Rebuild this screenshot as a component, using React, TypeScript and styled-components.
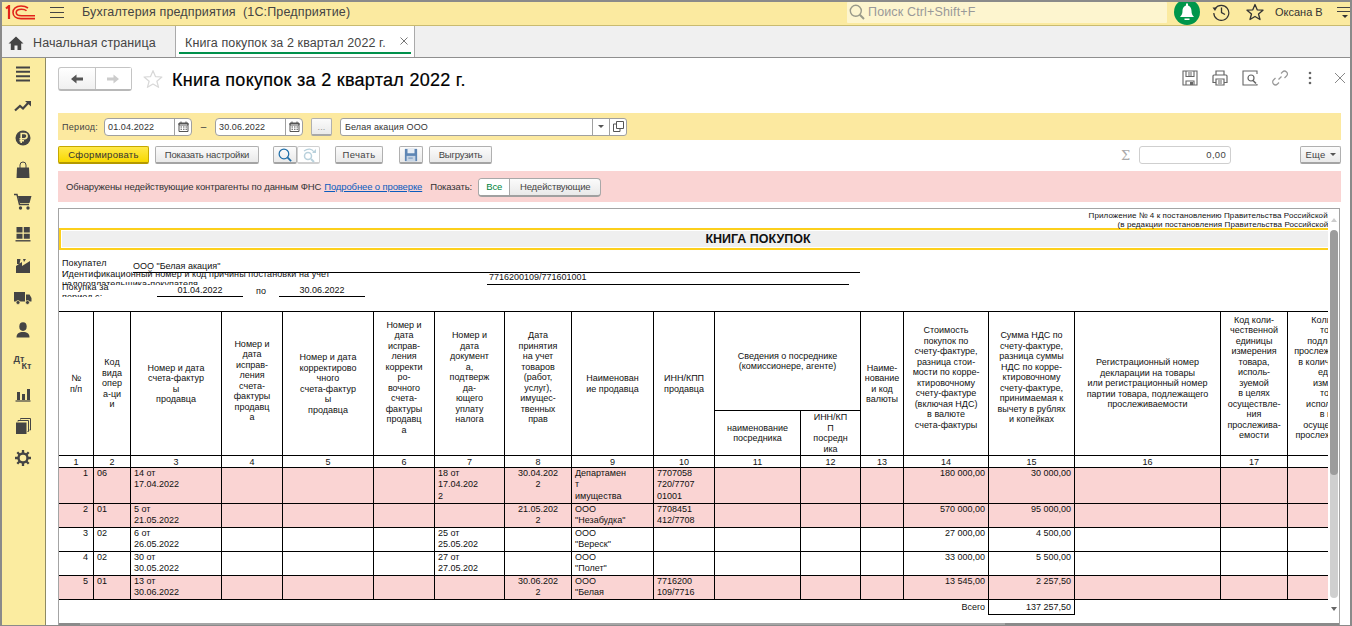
import React from "react";
import styled, { createGlobalStyle } from "styled-components";

const Global = createGlobalStyle`
  html, body { margin: 0; padding: 0; background: #fff; }
  body { font-family: "Liberation Sans", Arial, sans-serif; overflow: hidden; }
  * { box-sizing: border-box; }
`;

const Window = styled.div`
  width: 1352px; height: 626px; display: flex; flex-direction: column; overflow: hidden;
  border: 2px solid #8a8a8a; border-bottom-width: 1px; background: #fff; color: #333;
`;
const TopBar = styled.header`
  height: 24px; flex: none; display: flex; align-items: center; background: #fbeaa0;
  border-bottom: 1px solid #c9bb70; overflow: hidden;
`;
const LogoBox = styled.div`width: 32px; margin-left: 3px; height: 15px; display: flex; flex: none; margin-top: -2px;`;
const Burger = styled.div`
  width: 14px; height: 11px; margin-left: 13px; border-top: 1px solid #444; border-bottom: 1px solid #444; position: relative; margin-top: -2px; flex: none;
  &::after { content: ""; position: absolute; left: 0; right: 0; top: 4px; height: 1px; background: #444; }
`;
const AppTitle = styled.div`margin-left: 18px; font-size: 12.5px; color: #444; letter-spacing: .15px; white-space: pre; margin-top: -4px; width: 765px; flex: none;`;
const SearchBox = styled.div`
  width: 320px; height: 21px; background: #fdf5cf; display: flex; align-items: center; padding-left: 2px; gap: 3px; margin-top: -3px; border-radius: 1px; flex: none;
  color: #999; font-size: 12.5px; letter-spacing: .15px;
`;
const BellCircle = styled.div`margin-left: 7px; margin-top: -4px; width: 26px; height: 26px; flex: none; display: flex;`;
const TopIcon = styled.div`width: 18px; height: 18px; flex: none; display: flex; margin-top: -4px; margin-left: ${p => p.$ml}px;`;
const UserName = styled.div`margin-left: 11px; font-size: 11px; color: #333; margin-top: -3px; width: 47px; white-space: nowrap; flex: none;`;
const TopMenu = styled.div`margin-left: 15px; width: 13px; display: flex; flex-direction: column; gap: 3px; margin-top: -3px; flex: none;
  span { display: block; height: 1px; background: #444; }
  span:last-child { width: 0; height: 0; background: none; border: 3px solid transparent; border-top-color: #333; border-bottom: 0; margin-left: 5px; margin-top: 0; }
`;

const TabBar = styled.nav`
  height: 32px; flex: none; display: flex; background: #f0f0f0; border-bottom: 1px solid #8f8f8f;
`;
const HomeTab = styled.div`
  width: 173px; display: flex; align-items: center; padding-left: 6px; gap: 9px; font-size: 12.5px; color: #444; letter-spacing: .1px; padding-top: 2px;
`;
const ActiveTab = styled.div`
  width: 240px; background: #fff; border-left: 1px solid #aaa; border-right: 1px solid #aaa; position: relative; display: flex; align-items: center;
  padding-left: 9px; padding-top: 2px; font-size: 12.5px; color: #444; letter-spacing: .1px; white-space: nowrap;
  &::after { content: ""; position: absolute; left: 3px; right: 3px; bottom: 3px; height: 2px; background: #00914c; }
`;
const TabClose = styled.span`position: absolute; right: 6px; top: 11px; display: flex;`;

const Body = styled.div`flex: 1; min-height: 0; display: flex;`;
const Sidebar = styled.aside`
  width: 44px; flex: none; background: #fbeca0; border-right: 1px solid #8e8a63; display: flex; flex-direction: column; align-items: center;
`;
const SideItem = styled.div`
  width: 18px; height: 32px; display: flex; align-items: center; justify-content: center; margin-left: -2px; flex: none; color: #444; position: relative;
`;
const DtKt = styled.div`
  font-size: 9px; font-weight: 700; color: #444; width: 18px; line-height: 8px; letter-spacing: 0;
  span { display: block; }
  span + span { text-align: right; margin-top: -1px; }
`;
const Main = styled.main`flex: 1; min-width: 0; display: flex; flex-direction: column; padding: 9px 9px 0 12px;`;

const TitleRow = styled.div`height: 24px; display: flex; align-items: center; flex: none;`;
const NavGroup = styled.div`
  display: flex; width: 74px; height: 24px; border: 1px solid #c4c4c4; border-bottom: 2px solid #b8b8b8; border-radius: 3px; background: linear-gradient(#fff, #f0f0f0);
`;
const NavBtn = styled.div`
  flex: 1; display: flex; align-items: center; justify-content: center;
  & + & { border-left: 1px solid #c4c4c4; background: #fff; }
`;
const FavStar = styled.div`margin-left: 11px; width: 20px; height: 20px; display: flex;`;
const PageTitle = styled.h1`margin: 2px 0 0 9px; font-size: 18px; font-weight: 400; color: #000; letter-spacing: .28px; -webkit-text-stroke: .2px #000; white-space: nowrap;`;
const TitleActions = styled.div`margin-left: auto; margin-right: -7px; display: flex; align-items: center; gap: 14px; margin-top: -2px;`;
const ActionIcon = styled.div`width: 16px; height: 16px; display: flex;`;

const FilterBand = styled.section`
  margin-top: 22px; height: 27px; flex: none; background: #fce9a0; display: flex; align-items: center; padding-left: 4px; font-size: 9px; color: #444; letter-spacing: .12px;
`;
const FieldLabel = styled.span`width: 42px; flex: none; letter-spacing: .3px;`;
const DateField = styled.div`
  width: 88px; height: 18px; background: #fff; border: 1px solid #a0a0a0; border-radius: 4px; display: flex; align-items: center; flex: none; padding-left: 3px; color: #333;
`;
const DateText = styled.span`flex: 1;`;
const CalBtn = styled.span`width: 17px; height: 16px; border-left: 1px solid #a0a0a0; display: flex; align-items: center; justify-content: center;`;
const Dash = styled.span`width: 23px; text-align: center; flex: none; font-size: 10px;`;
const DotsBtn = styled.div`
  margin-left: 8px; width: 21px; height: 18px; border: 1px solid #b0b0b0; border-bottom: 2px solid #a8a8a8; border-radius: 2px; background: linear-gradient(#fbfbfb, #eaeaea); text-align: center; font-size: 9px; line-height: 17px; color: #999; flex: none;
`;
const OrgField = styled.div`
  margin-left: 8px; width: 287px; height: 18px; background: #fff; border: 1px solid #a0a0a0; border-radius: 3px; display: flex; align-items: center; flex: none; padding-left: 4px; color: #333;
`;
const OrgText = styled.span`flex: 1;`;
const OrgBtn = styled.span`width: 17px; height: 16px; border-left: 1px solid #a0a0a0; display: flex; align-items: center; justify-content: center;`;
const Caret = styled.span`width: 0; height: 0; border: 3px solid transparent; border-top: 3px solid #555; border-bottom: 0;`;

const ActionRow = styled.section`margin-top: 6px; height: 18px; flex: none; display: flex; align-items: stretch; font-size: 9.5px; letter-spacing: .3px;`;
const Btn = styled.div`
  width: ${p => p.$w}px; margin-left: ${p => p.$ml || 0}px; flex: none; display: flex; align-items: center; justify-content: center; gap: 4px;
  border: 1px solid #b0b0b0; border-bottom: 2px solid #a4a4a4; border-radius: 2px; background: linear-gradient(#fcfcfc, #e9e9e9); color: #444;
  ${p => p.$tight && "letter-spacing: -.2px;"}
`;
const PrimaryBtn = styled(Btn)`
  background: linear-gradient(#ffe94a, #f8d800); border-color: #c5a800; border-bottom-color: #b49900; color: #333;
`;
const GhostBtn = styled(Btn)`background: #fff; border-color: #d0d0d0;`;
const Sigma = styled.span`margin-left: auto; width: 18px; color: #aaa; font-size: 13px; font-family: "DejaVu Serif", serif; line-height: 20px; flex: none;`;
const SumField = styled.div`
  width: 92px; flex: none; border: 1px solid #cfcfcf; border-radius: 3px; text-align: right; padding-right: 4px; line-height: 16px; color: #444; background: #fff;
`;

const AlertBand = styled.section`
  margin-top: 7px; height: 31px; flex: none; background: #fad4d3; display: flex; align-items: center; padding-left: 8px; font-size: 9.5px; letter-spacing: -.13px; color: #333; white-space: nowrap;
`;
const AlertLink = styled.a`margin-left: 3px; color: #0b5cbe; text-decoration: underline;`;
const AlertShow = styled.span`margin-left: 8px; width: 49px; flex: none;`;
const Segment = styled.div`
  width: 123px; height: 19px; display: flex; border: 1px solid #a8a8a8; border-bottom: 2px solid #a0a0a0; border-radius: 4px; overflow: hidden; background: linear-gradient(#fbfbfb, #e9e9e9); margin-top: 1px; margin-left: -1px;
`;
const SegOn = styled.span`width: 31px; background: #fff; color: #00843d; text-align: center; line-height: 16px; border-right: 1px solid #a8a8a8; flex: none;`;
const SegOff = styled.span`flex: 1; text-align: center; line-height: 16px; color: #444;`;

const ReportFrame = styled.section`
  margin-top: 6px; margin-right: 1px; flex: 1; min-height: 0; border: 1px solid #a4a4a4; border-bottom: 0; display: flex; flex-direction: column;
`;
const ReportInner = styled.div`flex: 1; min-height: 0; display: flex;`;
const Viewport = styled.div`flex: 1; min-width: 0; overflow: hidden;`;
const Sheet = styled.div`width: 1398px; font-size: 9px; color: #111;`;
const Notes = styled.div`height: 19px; padding-top: 2px; text-align: right; font-size: 8px; line-height: 9px; letter-spacing: .1px; white-space: nowrap;`;
const Band = styled.div`
  height: 22px; border: 2px solid #fccf1c; box-shadow: inset 0 0 0 1px #fff; background: #efefef; text-align: center; font-size: 12.5px; font-weight: 700; line-height: 18px; color: #111;
`;
const BuyerGrid = styled.div`
  height: 61px; display: grid;
  grid-template-columns: 3px 71px 24px 86px 36px 86px 122px 362px 11px 1fr;
  grid-template-rows: 10px 9px 4px 11px 1px 12px 14px;
`;
const BuyerLabel = styled.div`
  grid-column: 2 / ${p => p.$colEnd}; grid-row: ${p => p.$row}; overflow: hidden; width: ${p => p.$w}px;
`;
const BuyerLabelText = styled.div`
  margin-top: ${p => p.$shift || 0}px; line-height: 10px; letter-spacing: .09px; overflow-wrap: anywhere;
`;
const BuyerValue = styled.div`
  grid-column: ${p => p.$col}; grid-row: ${p => p.$row}; border-bottom: ${p => (p.$line ? "1px solid #000" : "0")};
  line-height: 11px; white-space: nowrap; display: flex; align-items: flex-end; justify-content: ${p => p.$align === "center" ? "center" : "flex-start"}; padding-left: ${p => p.$pl || 0}px; padding-bottom: ${p => p.$pb || 0}px;
`;

const Table = styled.table`
  border-collapse: separate; border-spacing: 0; table-layout: fixed; width: 1325px; font-size: 9px; color: #111;
`;
const Head = styled.th`
  font-weight: 400; border-right: 1px solid #000; border-bottom: 1px solid #000; ${p => p.$top && "border-top: 1px solid #000;"} padding: 0 0 ${p => p.$pb || 0}px; text-align: center; vertical-align: middle;
  white-space: pre; line-height: 10.5px; overflow: hidden; height: ${p => p.$h || "auto"}; background: #fff;
`;
const NumCell = styled.td`
  border-right: 1px solid #000; border-bottom: 1px solid #000; text-align: center; padding: 0; height: 12px; line-height: 10px; overflow: hidden; font-size: 9px;
`;
const DataRow = styled.tr`background: ${p => (p.$pink ? "#fad4d3" : "#fff")};`;
const DataCell = styled.td`
  border-right: 1px solid #000; border-bottom: 1px solid #000; padding: 0 3px; vertical-align: top; white-space: pre; line-height: 11.4px; overflow: hidden;
  text-align: ${p => p.$align || "left"}; height: ${p => p.$h}px;
  &:first-child { padding-right: 5px; }
`;
const TotalLabel = styled.td`text-align: right; padding: 0 3px; height: 15px; line-height: 14px; border-right: 1px solid #000; vertical-align: top;`;
const TotalValue = styled.td`text-align: right; padding: 0 3px; border-right: 1px solid #000; border-bottom: 1px solid #000; line-height: 14px; vertical-align: top;`;

const VScroll = styled.div`width: 11px; flex: none; display: flex; flex-direction: column; align-items: stretch; padding: 0 1px 0 2px; background: #fff;`;
const ArrowUp = styled.div`width: 0; height: 0; margin: 9px 0 8px 1px; border: 3px solid transparent; border-top: 0; border-bottom: 4px solid #ccc;`;
const ScrollTrack = styled.div`height: 368px; flex: none; background: #cfcfcf; border-radius: 4px; overflow: hidden;`;
const ScrollThumb = styled.div`height: 245px; background: #9c9c9c; border-radius: 4px;`;
const ArrowDown = styled.div`width: 0; height: 0; margin: 9px 0 0 1px; border: 3px solid transparent; border-bottom: 0; border-top: 4px solid #666;`;
const HScroll = styled.div`height: 2px; flex: none; background: #8a8a8a; padding-left: 21px;`;
const HThumb = styled.div`width: 925px; height: 2px; background: #a6a6a6;`;

const d = "#444";

const Logo = () => (
  <svg width="30" height="15" viewBox="0 0 30 15" fill="none" stroke="#e2231a" strokeWidth="1.6">
    <path d="M1 3.5 L4 1 V14" strokeWidth="2.2" />
    <path d="M23 3 C21 1.5 19 1 16 1 C11 1 8 4 8 7.5 C8 11 11 13.6 16 13.6 H30" />
    <path d="M21.5 5.8 C20.5 4.8 18.5 4.2 16.5 4.2 C13.5 4.2 11.2 5.5 11.2 7.5 C11.2 9.5 13.5 10.8 16.5 10.8 H30" />
  </svg>
);
const Svg = ({ s = 18, vb = 18, children, ...r }: any) => (
  <svg width={s} height={s} viewBox={`0 0 ${vb} ${vb}`} fill="none" {...r}>{children}</svg>
);

const IMenu = () => <Svg><path d="M2 2.5h14M2 6.8h14M2 11.2h14M2 15.5h14" stroke={d} strokeWidth="2" /></Svg>;
const ITrend = () => <Svg><path d="M1 13.5 L6 9 L9 11.5 L15 5" stroke={d} strokeWidth="2.2" /><path d="M11 4 H17 V9.5 Z" fill={d} /></Svg>;
const IRuble = () => <Svg><circle cx="9" cy="9" r="7.5" fill={d} /><path d="M7.2 14V4.5H10.5a2.6 2.6 0 0 1 0 5.2H5.5M5.5 11.8H10" stroke="#fbeca0" strokeWidth="1.6" /></Svg>;
const IBag = () => <Svg><path d="M3 6.500h12l.5 10.500H2.500z" fill={d} /><path d="M6 9V4a3 3 0 0 1 6 0v5" stroke={d} strokeWidth="1" /></Svg>;
const ICart = () => <Svg><path d="M0 1.5h3l2.5 10H15" stroke={d} strokeWidth="1.4" /><path d="M4 3h13.5l-2 7H5.5z" fill={d} /><circle cx="6.5" cy="15" r="1.7" fill={d} /><circle cx="14" cy="15" r="1.7" fill={d} /></Svg>;
const IGrid = () => <Svg><path d="M2.5 2h6v5.5h-6zM9.8 2h6v5.5h-6zM2.5 8.8h6v5h-6zM9.8 8.8h6v5h-6z" fill={d} /><path d="M1.5 15.8h15" stroke={d} strokeWidth="1.4" /></Svg>;
const IFactory = () => <Svg><path d="M2 16V9l6-4v4l8-5v12z M3 2h3.5l-1 5H3z M9 2h3l-2 3z" fill={d} /></Svg>;
const ITruck = () => <Svg><path d="M0 3h11v9.5H0zM12 5.5h3.5L17.5 9v3.5H12z" fill={d} /><circle cx="4" cy="13.5" r="2" fill={d} stroke="#fbeca0" strokeWidth=".7" /><circle cx="13.5" cy="13.5" r="2" fill={d} stroke="#fbeca0" strokeWidth=".7" /></Svg>;
const IPerson = () => <Svg><ellipse cx="9" cy="5.6" rx="3.7" ry="4.3" fill={d} /><path d="M2.5 16.5c0-4 2.5-5.5 6.5-5.5s6.5 1.500 6.500 5.500z" fill={d} /></Svg>;
const IChart = () => <Svg><path d="M3 7h3v8H3zM8 9h3v6H8zM13 4h3v11h-3z" fill={d} /><path d="M1.500 16h15" stroke={d} strokeWidth="1.200" /></Svg>;
const ICopies = () => <Svg><path d="M2 5.500h10.500v11.500H2z" fill={d} /><path d="M4 4.500V3.500h10.500v11h-1M6.500 2.500V1.500h10v11.500h-1" stroke={d} strokeWidth="1" /></Svg>;
const IGear = () => (
  <Svg><circle cx="9" cy="9" r="4.500" stroke={d} strokeWidth="2.400" />
    <path d="M9 1v3M9 14v3M1 9h3M14 9h3M3.300 3.300l2.200 2.200M12.500 12.500l2.200 2.200M3.300 14.700l2.200-2.200M12.500 5.500l2.200-2.200" stroke={d} strokeWidth="2.300" /></Svg>
);
const SearchIcon = ({ c = "#9a9a8a", s = 16 }: any) => (
  <Svg s={s} vb={16}><circle cx="6.800" cy="6.800" r="5.500" stroke={c} strokeWidth="1.400" /><path d="M10.800 10.800 L15 15" stroke={c} strokeWidth="2" /></Svg>
);
const Bell = () => (
  <svg width="26" height="26" viewBox="0 0 26 26">
    <circle cx="13" cy="13" r="13" fill="#00964b" />
    <path d="M13 6.500c-3 0-4.500 2.500-4.500 5.500 0 3-1 4.500-2.500 6h14c-1.500-1.500-2.500-3-2.500-6 0-3-1.500-5.500-4.500-5.500z" fill="#fff" />
    <path d="M10.500 19.500h5v1.500h-5z" fill="#fff" />
    <rect x="12" y="4.500" width="2" height="2.500" fill="#fff" />
  </svg>
);
const HistoryI = () => (
  <Svg><path d="M3.200 5.500A7.500 7.500 0 1 1 1.800 10" stroke="#333" strokeWidth="1.200" /><path d="M.5 4.500h4.500L3 8z" fill="#333" /><path d="M9.500 4.500V9.500L13 11.500" stroke="#333" strokeWidth="1.300" /></Svg>
);
const StarI = ({ c = "#333", w = 1.300, s = 18 }: any) => (
  <Svg s={s} vb={18}><path d="M9 1.500 11.200 6.800 17 7.200 12.500 11 14 16.500 9 13.500 4 16.500 5.500 11 1 7.200 6.800 6.800z" stroke={c} strokeWidth={w} strokeLinejoin="round" /></Svg>
);
const HomeI = () => (
  <Svg s={16} vb={16}><path d="M8 1.500 0.500 8.500h2.300V15h3.700v-4.500h3V15h3.700V8.500h2.300z" fill="#444" /></Svg>
);
const CloseI = ({ c = "#777", s = 8 }: any) => <Svg s={s} vb={8}><path d="M.5.500l7 7M7.500.500l-7 7" stroke={c} strokeWidth="1" /></Svg>;
const ArrowL = ({ c = "#555" }: any) => <Svg s={14} vb={14}><path d="M1 7 6.500 2.500V5.500H13v3H6.500V11.500z" fill={c} /></Svg>;
const ArrowR = ({ c = "#ccc" }: any) => <Svg s={14} vb={14}><path d="M13 7 7.500 2.500V5.500H1v3H7.500V11.500z" fill={c} /></Svg>;
const m = "#666";
const FloppyI = () => <Svg s={16} vb={16}><path d="M1 1h14v14H1zM4 1v5.500h8V1M4 15v-4h8v4" stroke={m} strokeWidth="1.100" /><path d="M6 3h4M6 5h4" stroke={m} /><path d="M8 12h3v3H8z" fill={m} /></Svg>;
const PrintI = () => <Svg s={16} vb={16}><path d="M4 5V1h8v4M3.500 12.500H1V6a1 1 0 0 1 1-1h12a1 1 0 0 1 1 1v6.500h-2.500M4 9h8v6H4z" stroke={m} strokeWidth="1.200" /><path d="M6 11h4M6 13h4" stroke={m} /></Svg>;
const PreviewI = () => <Svg s={16} vb={16}><path d="M15 4V1H1v14h14v-1" stroke={m} strokeWidth="1.100" /><circle cx="9" cy="8" r="3" stroke={m} strokeWidth="1.200" /><path d="M11 10.500l3 3" stroke={m} strokeWidth="1.600" /></Svg>;
const LinkI = () => <Svg s={16} vb={16}><path d="M6.500 9.500l3-3M9 3.500l1.500-1.500a2.800 2.800 0 0 1 4 4L12.500 8M7 12.500 5.500 14a2.800 2.800 0 0 1-4-4L3.500 8" stroke="#999" strokeWidth="1.200" /></Svg>;
const DotsI = () => <Svg s={16} vb={16}><circle cx="8" cy="3" r="1.300" fill="#666" /><circle cx="8" cy="8" r="1.300" fill="#666" /><circle cx="8" cy="13" r="1.300" fill="#666" /></Svg>;
const CalI = () => <Svg s={11} vb={11}><path d="M1 2h9v8.500H1z" stroke="#555" /><path d="M1 2.500h9V4H1zM3 .5v2M8 .5v2" stroke="#555" /><path d="M2.500 5.500h1.500v1H2.500zM5 5.500h1.500v1H5zM7.500 5.500H9v1H7.500zM2.500 7.800h1.500v1H2.500zM5 7.800h1.500v1H5zM7.500 7.800H9v1H7.500z" fill="#555" /></Svg>;
const OpenI = () => <Svg s={11} vb={11}><path d="M3.500.5h7v7h-7zM3 3H.5v7.500H7V8" stroke="#555" /></Svg>;
const RefreshI = () => <Svg s={16} vb={16}><circle cx="7" cy="9" r="3.500" stroke="#b9d1dc" strokeWidth="1.500" /><path d="M10 12l3 3" stroke="#b9d1dc" strokeWidth="2" /><path d="M3 4c4-3 8-2.500 10 1" stroke="#b9d1dc" strokeWidth="1.200" /><path d="M11 6h4V2z" fill="#b9d1dc" /></Svg>;
const DiskI = () => <Svg s={14} vb={16}><path d="M1 1h14v14H1z" fill="#5e86b4" /><path d="M4 1h8v5H4z" fill="#e8eef5" /><path d="M3 9h10v6H3z" fill="#c6d4e4" /><path d="M5 11h5v1H5z" fill="#5e86b4" /></Svg>;

const widths = [35, 37, 91, 61, 91, 61, 70, 67, 82, 61, 86, 60, 43, 85, 86, 146, 67, 96];

const headsA = [
  "№\nп/п",
  "Код\nвида\nопер\nа-ци\nи",
  "Номер и дата\nсчета-фактур\nы\nпродавца",
  "Номер и\nдата\nиспрaв-\nления\nсчета-\nфактуры\nпродавц\nа",
  "Номер и дата\nкорректирово\nчного\nсчета-фактур\nы\nпродавца",
  "Номер и\nдата\nиспрaв-\nления\nкорректи\nро-\nвочного\nсчета-\nфактуры\nпродавц\nа",
  "Номер и\nдата\nдокумент\nа,\nподтверж\nда-\nющего\nуплату\nналога",
  "Дата\nпринятия\nна учет\nтоваров\n(работ,\nуслуг),\nимущес-\nтвенных\nправ",
  "Наименован\nие продавца",
  "ИНН/КПП\nпродавца",
];
const headsB = [
  "Наиме-\nнование\nи код\nвалюты",
  "Стоимость\nпокупок по\nсчету-фактуре,\nразница стои-\nмости по корре-\nктировочному\nсчету-фактуре\n(включая НДС)\nв валюте\nсчета-фактуры",
  "Сумма НДС по\nсчету-фактуре,\nразница суммы\nНДС по корре-\nктировочному\nсчету-фактуре,\nпринимаемая к\nвычету в рублях\nи копейках",
  "Регистрационный номер\nдекларации на товары\nили регистрационный номер\nпартии товара, подлежащего\nпрослеживаемости",
  "Код коли-\nчественной\nединицы\nизмерения\nтовара,\nисполь-\nзуемой\nв целях\nосуществле-\nния\nпрослежива-\nемости",
  "Количество\nтовара,\nподлежащего\nпрослеживаемости,\nв количественной\nединице\nизмерения\nтовара,\nиспользуемой\nв целях\nосуществления\nпрослеживаемости",
];
const lift = (t: string) => {
  const n = t.split("\n").length;
  return n >= 9 ? 12 : n === 8 ? 6 : 0;
};

type Row = { pink: boolean; h: number; n: string; op: string; inv: string; doc: string; acc: string; seller: string; inn: string; cost: string; vat: string };
const rows: Row[] = [
  { pink: true, h: 36, n: "1", op: "06", inv: "14 от\n17.04.2022", doc: "18 от\n17.04.202\n2", acc: "30.04.202\n2", seller: "Департамен\nт\nимущества", inn: "7707058\n720/7707\n01001", cost: "180 000,00", vat: "30 000,00" },
  { pink: true, h: 24, n: "2", op: "01", inv: "5 от\n21.05.2022", doc: "", acc: "21.05.202\n2", seller: "ООО\n\"Незабудка\"", inn: "7708451\n412/7708", cost: "570 000,00", vat: "95 000,00" },
  { pink: false, h: 24, n: "3", op: "02", inv: "6 от\n26.05.2022", doc: "25 от\n25.05.202", acc: "", seller: "ООО\n\"Вереск\"", inn: "", cost: "27 000,00", vat: "4 500,00" },
  { pink: false, h: 24, n: "4", op: "02", inv: "30 от\n30.05.2022", doc: "27 от\n27.05.202", acc: "", seller: "ООО\n\"Полет\"", inn: "", cost: "33 000,00", vat: "5 500,00" },
  { pink: true, h: 24, n: "5", op: "01", inv: "13 от\n30.06.2022", doc: "", acc: "30.06.202\n2", seller: "ООО\n\"Белая", inn: "7716200\n109/7716", cost: "13 545,00", vat: "2 257,50" },
];

const sideIcons = [<IMenu />, <ITrend />, <IRuble />, <IBag />, <ICart />, <IGrid />, <IFactory />, <ITruck />, <IPerson />,
  <DtKt><span>Дт</span><span>Кт</span></DtKt>, <IChart />, <ICopies />, <IGear />];

export default function App() {
  return (
    <>
      <Global />
      <Window>
        <TopBar>
          <LogoBox><Logo /></LogoBox>
          <Burger />
          <AppTitle>Бухгалтерия предприятия  (1С:Предприятие)</AppTitle>
          <SearchBox><SearchIcon />Поиск Ctrl+Shift+F</SearchBox>
          <BellCircle><Bell /></BellCircle>
          <TopIcon $ml={12}><HistoryI /></TopIcon>
          <TopIcon $ml={16}><StarI /></TopIcon>
          <UserName>Оксана В</UserName>
          <TopMenu><span /><span /><span /></TopMenu>
        </TopBar>
        <TabBar>
          <HomeTab><HomeI />Начальная страница</HomeTab>
          <ActiveTab>Книга покупок за 2 квартал 2022 г.<TabClose><CloseI /></TabClose></ActiveTab>
        </TabBar>
        <Body>
          <Sidebar>
            {sideIcons.map((ic, i) => <SideItem key={i}>{ic}</SideItem>)}
          </Sidebar>
          <Main>
            <TitleRow>
              <NavGroup>
                <NavBtn><ArrowL /></NavBtn>
                <NavBtn><ArrowR /></NavBtn>
              </NavGroup>
              <FavStar><StarI c="#d8d8d8" w={1.100} s={20} /></FavStar>
              <PageTitle>Книга покупок за 2 квартал 2022 г.</PageTitle>
              <TitleActions>
                <ActionIcon><FloppyI /></ActionIcon>
                <ActionIcon><PrintI /></ActionIcon>
                <ActionIcon><PreviewI /></ActionIcon>
                <ActionIcon><LinkI /></ActionIcon>
                <ActionIcon><DotsI /></ActionIcon>
                <ActionIcon><Svg s={16} vb={16}><path d="M3 3l10 10M13 3L3 13" stroke="#888" strokeWidth="1" /></Svg></ActionIcon>
              </TitleActions>
            </TitleRow>
            <FilterBand>
              <FieldLabel>Период:</FieldLabel>
              <DateField><DateText>01.04.2022</DateText><CalBtn><CalI /></CalBtn></DateField>
              <Dash>–</Dash>
              <DateField><DateText>30.06.2022</DateText><CalBtn><CalI /></CalBtn></DateField>
              <DotsBtn>...</DotsBtn>
              <OrgField>
                <OrgText>Белая акация ООО</OrgText>
                <OrgBtn><Caret /></OrgBtn>
                <OrgBtn><OpenI /></OrgBtn>
              </OrgField>
            </FilterBand>
            <ActionRow>
              <PrimaryBtn $w={91}>Сформировать</PrimaryBtn>
              <Btn $w={104} $ml={6} $tight>Показать настройки</Btn>
              <Btn $w={24} $ml={14}><SearchIcon c="#1f6ea8" s={14} /></Btn>
              <GhostBtn $w={23}><RefreshI /></GhostBtn>
              <Btn $w={48} $ml={15}>Печать</Btn>
              <Btn $w={24} $ml={16}><DiskI /></Btn>
              <Btn $w={63} $ml={6} $tight>Выгрузить</Btn>
              <Sigma>Σ</Sigma>
              <SumField>0,00</SumField>
              <Btn $w={41} $ml={69}>Еще<Caret /></Btn>
            </ActionRow>
            <AlertBand>
              Обнаружены недействующие контрагенты по данным ФНС
              <AlertLink>Подробнее о проверке</AlertLink>
              <AlertShow>Показать:</AlertShow>
              <Segment>
                <SegOn>Все</SegOn>
                <SegOff>Недействующие</SegOff>
              </Segment>
            </AlertBand>
            <ReportFrame>
              <ReportInner>
                <Viewport>
                  <Sheet>
                    <Notes>
                      Приложение № 4 к постановлению Правительства Российской Федерации от 26.12.2011 № 1137<br />
                      (в редакции постановления Правительства Российской Федерации от 19.08.2017 № 981)
                    </Notes>
                    <Band>КНИГА ПОКУПОК</Band>
                    <BuyerGrid>
                      <BuyerLabel $colEnd={3} $row="2 / 4" $w={45}><BuyerLabelText $shift={-2}>Покупатель:</BuyerLabelText></BuyerLabel>
                      <BuyerValue $col="3 / 10" $row="2 / 4" $line>ООО "Белая акация"</BuyerValue>
                      <BuyerLabel $colEnd={8} $row="3 / 6" $w={285}><BuyerLabelText>Идентификационный номер и код причины постановки на учет налогоплательщика-покупателя</BuyerLabelText></BuyerLabel>
                      <BuyerValue $col="8 / 9" $row="4 / 6" $line $pl={2} $pb={1}>7716200109/771601001</BuyerValue>
                      <BuyerLabel $colEnd={3} $row="5 / 7" $w={60}><BuyerLabelText $shift={-2}>Покупка за период с:</BuyerLabelText></BuyerLabel>
                      <BuyerValue $col="4 / 5" $row="6" $line $align="center">01.04.2022</BuyerValue>
                      <BuyerValue $col="5 / 6" $row="6" $align="center">по</BuyerValue>
                      <BuyerValue $col="6 / 7" $row="6" $line $align="center">30.06.2022</BuyerValue>
                    </BuyerGrid>
                    <Table>
                      <colgroup>
                        {widths.map((w, i) => <col key={i} style={{ width: w }} />)}
                      </colgroup>
                      <thead>
                        <tr>
                          {headsA.map((t, i) => <Head key={i} $top rowSpan={2} $pb={lift(t)}>{t}</Head>)}
                          <Head $top colSpan={2} $h="100px">{"Сведения о посреднике\n(комиссионере, агенте)"}</Head>
                          {headsB.map((t, i) => <Head key={i} $top rowSpan={2} $pb={lift(t)}>{t}</Head>)}
                        </tr>
                        <tr>
                          <Head $h="45px">{"наименование\nпосредника"}</Head>
                          <Head $h="45px">{"ИНН/КП\nП\nпосредн\nика"}</Head>
                        </tr>
                      </thead>
                      <tbody>
                        <tr>{widths.map((_, i) => <NumCell key={i}>{i + 1}</NumCell>)}</tr>
                        {rows.map(r => (
                          <DataRow key={r.n} $pink={r.pink}>
                            <DataCell $h={r.h} $align="right">{r.n}</DataCell>
                            <DataCell $h={r.h}>{r.op}</DataCell>
                            <DataCell $h={r.h}>{r.inv}</DataCell>
                            <DataCell $h={r.h} />
                            <DataCell $h={r.h} />
                            <DataCell $h={r.h} />
                            <DataCell $h={r.h}>{r.doc}</DataCell>
                            <DataCell $h={r.h} $align="center">{r.acc}</DataCell>
                            <DataCell $h={r.h}>{r.seller}</DataCell>
                            <DataCell $h={r.h}>{r.inn}</DataCell>
                            <DataCell $h={r.h} />
                            <DataCell $h={r.h} />
                            <DataCell $h={r.h} />
                            <DataCell $h={r.h} $align="right">{r.cost}</DataCell>
                            <DataCell $h={r.h} $align="right">{r.vat}</DataCell>
                            <DataCell $h={r.h} />
                            <DataCell $h={r.h} />
                            <DataCell $h={r.h} />
                          </DataRow>
                        ))}
                        <tr>
                          <TotalLabel colSpan={14}>Всего</TotalLabel>
                          <TotalValue>137 257,50</TotalValue>
                        </tr>
                      </tbody>
                    </Table>
                  </Sheet>
                </Viewport>
                <VScroll>
                  <ArrowUp />
                  <ScrollTrack><ScrollThumb /></ScrollTrack>
                  <ArrowDown />
                </VScroll>
              </ReportInner>
              <HScroll><HThumb /></HScroll>
            </ReportFrame>
          </Main>
        </Body>
      </Window>
    </>
  );
}
